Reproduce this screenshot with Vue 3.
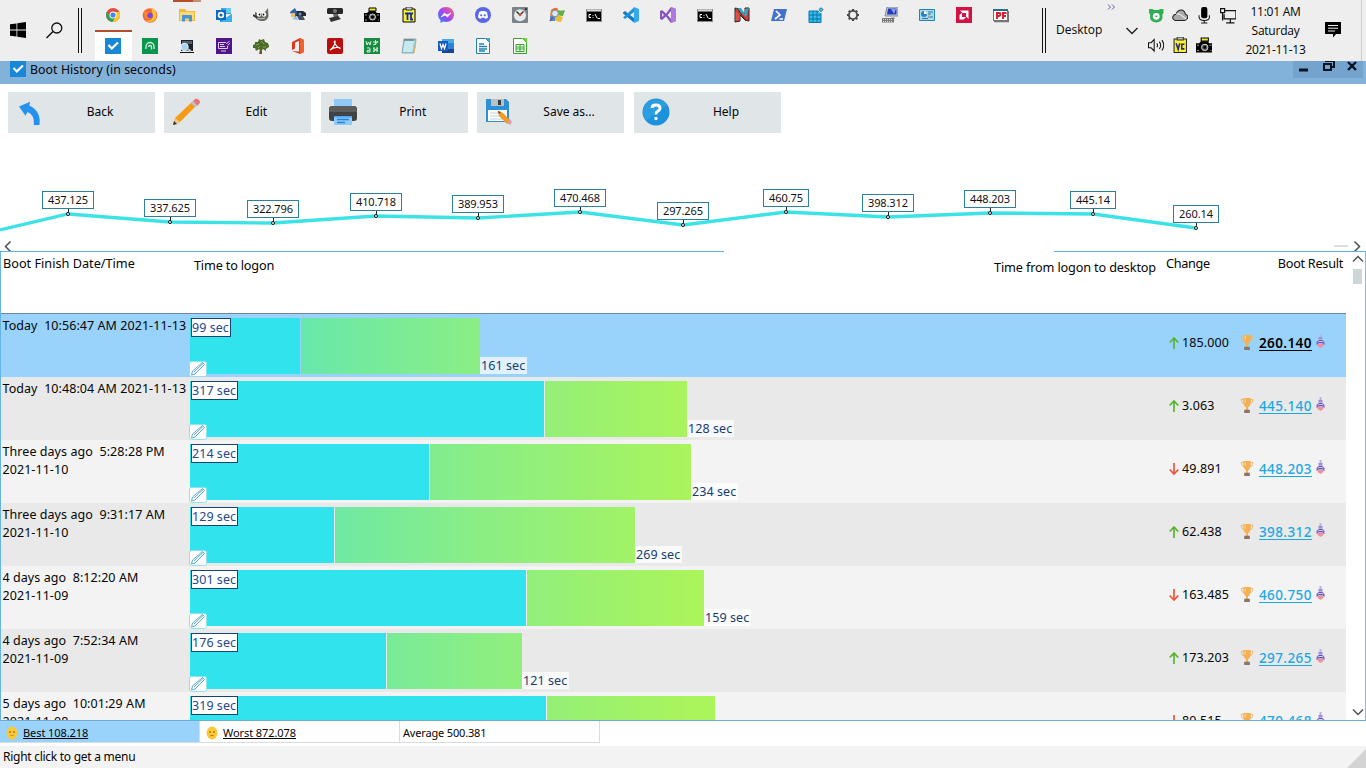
<script setup>
const chrome = '<circle cx="8" cy="8" r="7" fill="#e34b3c"/><path d="M2 4.500A7 7 0 0 0 7.500 15L10.500 9.500 8 8 4.800 9.500Z" fill="#2da653"/><path d="M8 5h6.400A7 7 0 0 1 7.500 15L11 9.500Z" fill="#fbc927"/><circle cx="8" cy="8" r="3.500" fill="#fff"/><circle cx="8" cy="8" r="2.600" fill="#4285f0"/>'
const firefox = '<circle cx="8" cy="8.500" r="7.300" fill="#f8633c"/><path d="M10 1c4 2 6 7 3.500 11C11 15.500 6 16 3 13c4 1.500 8-.500 8-4 0-3-2-4-1-8Z" fill="#fdc42e"/><path d="M2 3l2 2 3-1-1 2 3 1-3 2c1 2 3 2 4 1-1 3-6 3-7 0-.800-2-.500-4-1-7Z" fill="#fb8b2b"/><circle cx="8" cy="8.500" r="2.800" fill="#7c4bd6"/>'
const folder = '<path d="M0 2h6l1.500 2H16v10H0Z" fill="#f3b93f"/><path d="M1 5h14v8H1Z" fill="#fbd977"/><path d="M3 14.500V9q0-1 1-1h8q1 0 1 1v5.500h-3v-3H6v3Z" fill="#4595d8"/>'
const outlook = '<path d="M5 1h10v6H5Z" fill="#35a9e8"/><path d="M10 1h5v5h-5Z" fill="#62ccf7"/><path d="M4 7l6 4 6-4v8H4Z" fill="#1a85d3"/><path d="M4 15l12-8v8Z" fill="#38b2ef"/><rect y="3" width="10" height="10" fill="#0f69bd"/><circle cx="5" cy="8" r="2.400" fill="none" stroke="#fff" stroke-width="1.600"/>'
const gimp = '<path d="M2 5l3 1.500h6L15 1l.500 8c-.500 3-3 5-6 5-4 0-7-2-7.500-5Z" fill="#686760"/><path d="M0 8l5 3" stroke="#333" stroke-width="2"/><circle cx="6" cy="7.500" r="2.200" fill="#fff"/><circle cx="11" cy="7.500" r="2.200" fill="#fff"/><circle cx="6.500" cy="7.500" r=".9"/><circle cx="10.500" cy="7.500" r=".9"/><path d="M4 11q4 2 8 0" stroke="#c7c4bb" fill="none"/>'
const camWizard = '<path d="M5 4h8l3 2v3H5Z" fill="#242b38"/><path d="M7 9h6l2 4H9Z" fill="#475164"/><path d="M0 5l5-4 2 4-1 5H2Z" fill="#2e63ad"/><path d="M1 6h4v4H1Z" fill="#eebb68"/><path d="M2 12l4-3 2 4Z" fill="#8ec0ed"/><circle cx="10" cy="7" r="1.500" fill="#8395b6"/>'
const webcam = '<rect y="1" width="16" height="6" rx="1.500" fill="#272727"/><circle cx="8" cy="4" r="2" fill="#7a7a7a"/><path d="M6 7h5l1 4H7Z" fill="#666"/><path d="M2 11l9-2 3 3-10 3Z" fill="#333"/>'
const camera = '<path d="M0 6h3l2-2h6l2 2h3v9H0Z"/><path d="M5 1h7v3H5Z" fill="#f2ed31" stroke="#000"/><circle cx="8.500" cy="10" r="4" fill="#ccc" stroke="#000"/><circle cx="8.500" cy="10" r="2" stroke="#555"/><path d="M1 8h2M13 8h2M1 13h2M14 13h1" stroke="#999"/>'
const clipPi = '<path d="M2 2h12v13H2Z" fill="#f9f32c" stroke="#000"/><path d="M5 0h6v3H5Z" fill="#ccc" stroke="#333"/><path d="M4 6.500h8M6.500 7v6M10 7v5.500h2" stroke="#152aaf" stroke-width="1.800" fill="none"/>'
const messenger = '<defs><linearGradient id="ms" x1="0" y1="1" x2="1" y2="0"><stop stop-color="#168bff"/><stop offset=".5" stop-color="#a844ef"/><stop offset="1" stop-color="#ff6970"/></linearGradient></defs><path d="M8 0C3 0 0 3.500 0 7.500q0 3.500 2.500 5.500V16L5 14.600q1.500.400 3 .400c5 0 8-3.500 8-7.500S13 0 8 0Z" fill="url(#ms)"/><path d="M3 10l3.500-4 2.500 2 4-2-3.500 4L7 8Z" fill="#fff" stroke="#fff" stroke-width=".7"/>'
const discord = '<circle cx="8" cy="8" r="8" fill="#5966e9"/><path d="M4 5q4-2 8 0l1 5.500q-1.500 1.500-3 1.300l-.500-1h-3l-.500 1q-1.500 0-3-1.300Z" fill="#fff"/><circle cx="6.200" cy="8.300" r="1.100" fill="#5966e9"/><circle cx="9.800" cy="8.300" r="1.100" fill="#5966e9"/>'
const clock = '<rect width="16" height="16" rx="1" fill="#7b8389"/><circle cx="8" cy="8.200" r="6" fill="#e8ebed"/><path d="M4.500 4.500L8 8l3.500-3.500M8 8v1" stroke="#34393d" stroke-width="1.500" fill="none"/><circle cx="8" cy="8" r="1.300" fill="#e34d36"/><circle cx="14" cy="2" r="1" fill="#202427"/>'
const winflag = '<path d="M2 3q5-4 7-1L7 8 1 9Z" fill="#ea6d35"/><path d="M9 3q3 1 7 0l-2 6q-3 0-6-1Z" fill="#68af42"/><path d="M1 9l6 0-1 5-5 0Z" fill="#4a8ee0"/><path d="M7 8l7 2-2 5q-4 0-6-2Z" fill="#e9bd34"/><circle cx="6" cy="6.500" r="3.300" fill="#d7eaf7" stroke="#8291a5"/><path d="M4 10l-3 4" stroke="#666" stroke-width="1.500"/>'
const cmd = '<rect x=".5" y="2.500" width="15" height="12" fill="#000" stroke="#8a8a8a"/><path d="M1 3.500h14" stroke="#ddd" stroke-width="2"/><path d="M5 7.500H3v3h2M7 8v.8M7 10v.8M9 7l2 4M11.500 11.500h2.500" stroke="#fff" fill="none"/>'
const vscode = '<path d="M0 5.500L2 4l9.500 7.500V16L0 6.500Z" fill="#147cc5"/><path d="M11.500 0v4.500L2 12l-2-1.500Z" fill="#1e91d8"/><path d="M11 0l5 2v12l-5 2Z" fill="#34a9ee"/>'
const vstudio = '<path d="M0 4l2-1 4 3.500L11 0l5 2v12l-5 2-5-6.500L2 13l-2-1Z" fill="#8754bd"/><path d="M2 6v4l2-2ZM11 4v8L7.500 8Z" fill="#ededed"/><path d="M11 0l5 2v12l-5 2Z" fill="#ad7be0"/>'
const nred = '<path d="M1 1l5 1 5 5V1l4 0v13l-4-1-5-5v6l-5 1Z" fill="#d83a34" stroke="#282427"/><path d="M2 1h5l4 6V2l4-1-3 9Z" fill="#31a7c7"/><path d="M1.500 14V4l4 4v5Z" fill="#dc5149"/><path d="M3 1l9 13" stroke="#332c32"/>'
const pshell = '<path d="M3 2h13l-3 12H0Z" fill="#4372cd"/><path d="M5 4l4 4-5 4M8.500 12H12" stroke="#fff" stroke-width="1.700" fill="none"/>'
const registry = '<path d="M1 4h12v12H1Z" fill="#35b9ec"/><path d="M1 4h12v11.500H1ZM5 4v12M9 4v12M1 8h12M1 12h12" stroke="#0876a9" fill="none"/><path d="M10 3l2.500-3L16 2.500 13 6Z" fill="#61c4e8" stroke="#ededed"/><path d="M11 2.500L13 .800 15 2.500 13 4.500Z" fill="none" stroke="#197aa4"/>'
const gear = '<circle cx="8" cy="8" r="4.100" fill="none" stroke="#4d4d4d" stroke-width="1.900"/><path d="M8 2v2M8 12v2M2 8h2M12 8h2M3.700 3.700l1.300 1.300M11 11l1.300 1.300M12.300 3.700l-1.300 1.300M5 11l-1.300 1.300" stroke="#4d4d4d" stroke-width="2.200"/>'
const remote = '<path d="M5 0h11v9H3Z" fill="#c8cedb" stroke="#7e8796"/><path d="M6 1.500h8.500v6H5Z" fill="#2438bb"/><path d="M9 2l5 0-2 5Z" fill="#829eea"/><path d="M9 9h4v3H9Z" fill="#bbb"/><path d="M0 11h12v4.500H0Z" fill="#777"/><path d="M1 12.500h10M1 14.500h10" stroke="#ddd" stroke-dasharray="1"/>'
const panel = '<path d="M.5 2.500h15v11H.5Z" fill="#a8dbf1" stroke="#2781a8"/><circle cx="5" cy="7" r="3" fill="#2781c3"/><path d="M5 4a3 3 0 0 1 3 3H5Z" fill="#fff"/><path d="M9 5h5M9 7h3M9 10h5M3 11.500h6" stroke="#247aa5"/><circle cx="10" cy="9" r="1" fill="#e8a63b"/>'
const amd = '<rect width="16" height="16" fill="#d21243"/><path d="M4 3.500h8.500V12L10 9.500V6H6.500ZM3.500 8L6 5.800V10h4l-2.300 2.500H3.500Z" fill="#fff"/>'
const pf = '<rect x=".5" y="2.500" width="14" height="11" fill="#fff" stroke="#6d777e"/><path d="M0 3h15" stroke="#266d8f" stroke-width="2"/><path d="M1 14.500h14.500V4" stroke="#777" stroke-width="1.500" fill="none"/><path d="M4 12V6h2q1.500 0 1.500 1.500T6 9H4M10 12V6h3.500M10 9h3" stroke="#da1e2a" stroke-width="1.900" fill="none"/>'
const check = '<rect width="16" height="16" fill="#1887d5"/><path d="M3.500 7l3.300 3.500L13 4.500" stroke="#fff" stroke-width="2.200" fill="none"/>'
const spiral = '<rect width="16" height="16" fill="#07964b"/><path d="M4 11V8.500a4 4 0 0 1 8 0V11M6.500 9q0-1.500 1.500-1.500t1.500 1.500v2.500" stroke="#d6f3df" stroke-width="1.300" fill="none"/>'
const monitor = '<path d="M2 2h12v11H2Z" fill="#1c2229"/><path d="M3 3h10v3H3Z" fill="#54616c"/><path d="M1 14h14v1H1Z" fill="#111"/><circle cx="5.500" cy="9" r="3.700" fill="#a6d6ee" stroke="#eef"/><path d="M8 11l4 2" stroke="#b7c5ce" stroke-width="2"/>'
const screen = '<rect width="16" height="16" fill="#51158a"/><path d="M10 4.500H2.500v6h9V8M5 13h5M4 6.500h4M4 8.500h5M10.500 6q.500-2 3-2.500M12 7.500q0-1.500 2-2" stroke="#dfc9f5" fill="none"/>'
const tree = '<path d="M8 7L6 16h3L9 7Z" fill="#77532e"/><path d="M0 10l0-3 2-1L2 4l3 0 1-3 2 1 3-1 1 3 3 1 1 3 0 1-3 2 0 2-3-2-2 2-2-2-3 2-1-3Z" fill="#4d6c2c"/><path d="M3 7l3-1M8 3l3 3M5 10l2-2M10 9l3 0" stroke="#88a154"/>'
const office = '<path d="M2 4l8-4 4 2v12l-4 2-8-3 7 .500V3L5 4.500v6L2 12Z" fill="#da3b1d"/><path d="M10 0l4 2v12l-4 2Z" fill="#f0632f"/>'
const acrobat = '<rect width="16" height="16" rx="2" fill="#b90e0b"/><path d="M3 12c3-2 6-7 5-9-2 0 0 5 5 7.500 1-1.500-6-2-10 1.500Z" stroke="#fff" stroke-width="1.200" fill="none"/>'
const translate = '<rect width="16" height="16" fill="#178b3f"/><path d="M2 3l1 4 1.500-3L6 7l1-4M9 4h5M11.500 2v5M9 7q4-1 5-4M3 10q3-1 3 1v3H3q-1-2 3-2M10 9v5M13 9v5M9 10l5 3M9 14l5-4" stroke="#d8f4df" fill="none"/>'
const notepad = '<path d="M3 1h12l-2 14H1Z" fill="#9bd3df" stroke="#809da0" stroke-width=".8"/><path d="M4 3h9l-2 11H2Z" fill="#c6eaf0"/><path d="M4 1v2M6 1v2M8 1v2M10 1v2M12 1v2" stroke="#546267"/><path d="M13 15l2-12" stroke="#e4b362"/>'
const word = '<path d="M4 1h12v14H4Z" fill="#2e83d5"/><path d="M4 1h12v4H4Z" fill="#48a9ee"/><path d="M4 11h12v4H4Z" fill="#174696"/><path d="M0 3h10v10H0Z" fill="#185abd"/><path d="M2 5.500l1.500 5 1.500-4 1.500 4 1.500-5" stroke="#fff" stroke-width="1.200" fill="none"/>'
const writer = '<path d="M1.500.5h9l4 4v11h-13Z" fill="#fff" stroke="#2383af"/><path d="M10 0h5v5Z" fill="#44a4cd"/><path d="M4 6h5M4 8.500h8M4 11h8M4 13h6" stroke="#2383af" stroke-width="1.300"/>'
const calc = '<path d="M1.500.5h9l4 4v11h-13Z" fill="#fff" stroke="#37a42c"/><path d="M10 0h5v5Z" fill="#70cf45"/><path d="M4 6.500h8v7H4ZM4 9h8M4 11h8M8 6.500v7" stroke="#37a42c" fill="none"/>'
const topIcons = [chrome, firefox, folder, outlook, gimp, camWizard, webcam, camera, clipPi, messenger, discord, clock, winflag, cmd, vscode, vstudio, cmd, nred, pshell, registry, gear, remote, panel, amd, pf]
const lowIcons = [check, spiral, monitor, screen, tree, office, acrobat, translate, notepad, word, writer, calc]

const bear = '<path d="M1 2h3l2 1h4l2-1h3v4l-1 1v4q-1 4-6 4T2 11V7L1 6Z" fill="#2fae54"/><circle cx="8" cy="9" r="3.300" fill="#fff"/><path d="M6.500 8.500h3L8 10Z" fill="#1b8040"/>'
const cloud = '<path d="M3 13q-3-1-2-4 1-2 3-2 1-4 5-4 3 0 4 4 3 1 2 4-1 2-3 2Z" fill="#aaa" stroke="#222"/><path d="M4 7q3-1 5 1l5 4" stroke="#eee" fill="none"/>'
const mic = '<rect x="5" y="0" width="6" height="11" rx="2"/><path d="M3 8v2q0 3 5 3t5-3V8M8 13v3M5 15.500h6" stroke="#111" fill="none"/>'
const net = '<path d="M5 3.500h10.500v8H4V7M10 12v3M6 15.500h8M.500 1.500h4v4h-4ZM2.500 6v7" fill="none" stroke="#111" stroke-width="1.200"/>'
const speaker = '<path d="M.5 5.500H3L6 2.500v11L3 10.500H.500ZM8.500 6q1.500 2 0 4M11 4.500q2.500 3.500 0 7M13.500 3q3.500 5 0 10" fill="none" stroke="#111"/>'
const clipVc = '<path d="M2 2h12v13H2Z" fill="#f9f32c" stroke="#222"/><path d="M5 0h6v3H5Z" fill="#bbb" stroke="#333"/><path d="M4 6l2 6 1.500-6M12 7H9.500v4.500H12" stroke="#28238b" stroke-width="1.500" fill="none"/>'
const tray = [bear, cloud, mic, net, speaker, clipVc, camera]

const undo = '<path d="M0 7L12 2l-1 4q13 6 11 21l-6 0q1-11-7-14l-2 4Z" fill="#2492ed"/>'
const pencil = '<path d="M1 27l2-7L21 3l4 4L8 24Z" fill="#f79b17"/><path d="M21 3l2-2q2-1 4 1t0 4l-2 2Z" fill="#e77478"/><path d="M19 5l2-2 4 4-2 2Z" fill="#b7c4cc"/><path d="M3 20l5 4-7 3Z" fill="#f2c48b"/><path d="M1 27l1-4 3 3Z" fill="#333"/>'
const printer = '<path d="M5 1h18v8H5Z" fill="#90caf9"/><rect y="8" width="28" height="15" rx="3" fill="#424242"/><path d="M2 8h24l2 4v2H0v-2Z" fill="#5d5d5d"/><path d="M5 18h18v9H5Z" fill="#90caf9"/><path d="M5 18h18v1.500H5Z" fill="#42a5f5"/><path d="M8 21.500h12M8 24.500h8" stroke="#2485d9" stroke-width="1.300"/>'
const save = '<path d="M1 1h20l3 3v20H1Z" fill="#2f8fd3"/><path d="M6 1h13v7H6Z" fill="#b9c1c5"/><path d="M13 2h3v5h-3Z" fill="#343f45"/><path d="M3 12h19v11H3Z" fill="#fff"/><path d="M5 15h13M5 18h10M5 21h13" stroke="#c3d1d9"/><path d="M13 13l5 2 7 7-3 4-8-8Z" fill="#f59a20"/><path d="M22 25l3-4 2 3-2 3Z" fill="#dd99b4"/><path d="M13 13l3 1-2 2Z" fill="#54473a"/>'
const help = '<circle cx="14" cy="14" r="13.500" fill="#1d92dc"/><path d="M3 7A13.500 13.500 0 0 1 25 7L4 23A13.500 13.500 0 0 1 3 7Z" fill="#35a6e5" opacity=".6"/><path d="M10 10q0-3 4-3t4 3.200q0 2-2.500 3.200Q14 14 14 16.500" fill="none" stroke="#fff" stroke-width="2.800"/><circle cx="14" cy="20.500" r="1.700" fill="#fff"/>'
const tools = [
  { label: 'Back', icon: undo, cls: 'small' }, { label: 'Edit', icon: pencil }, { label: 'Print', icon: printer },
  { label: 'Save as...', icon: save }, { label: 'Help', icon: help, cls: 'wide' }
]

const points = [
  [68, 214, '437.125'], [170, 222, '337.625'], [273, 223, '322.796'], [376, 216, '410.718'], [478, 218, '389.953'], [580, 212, '470.468'],
  [683, 225, '297.265'], [786, 212, '460.75'], [888, 217, '398.312'], [990, 213, '448.203'], [1093, 214, '445.14'], [1196, 228, '260.14']
].map(([x, y, v]) => ({ x, y: y - 133, v, w: v.length > 6 ? 51 : 45 }))
const line = '0,97 ' + points.map(p => p.x + ',' + p.y).join(' ')

const rows = [
  { d: 'Today\u00a0 10:56:47 AM 2021-11-13', a: 99, aw: 110, b: 161, bw: 179, up: true, c: '185.000', r: '260.140' },
  { d: 'Today\u00a0 10:48:04 AM 2021-11-13', a: 317, aw: 354, b: 128, bw: 142, up: true, c: '3.063', r: '445.140' },
  { d: 'Three days ago\u00a0 5:28:28 PM', e: '2021-11-10', a: 214, aw: 239, b: 234, bw: 261, up: false, c: '49.891', r: '448.203' },
  { d: 'Three days ago\u00a0 9:31:17 AM', e: '2021-11-10', a: 129, aw: 144, b: 269, bw: 300, up: true, c: '62.438', r: '398.312' },
  { d: '4 days ago\u00a0 8:12:20 AM', e: '2021-11-09', a: 301, aw: 336, b: 159, bw: 177, up: false, c: '163.485', r: '460.750' },
  { d: '4 days ago\u00a0 7:52:34 AM', e: '2021-11-09', a: 176, aw: 196, b: 121, bw: 135, up: true, c: '173.203', r: '297.265' },
  { d: '5 days ago\u00a0 10:01:29 AM', e: '2021-11-08', a: 319, aw: 356, bw: 168, up: false, c: '80.515', r: '470.468' }
]
</script>

<template>
  <div class="desktop">
    <header class="taskbar">
      <svg class="start" viewBox="0 0 16 16"><path d="M0 2.300L6.500 1.400v6.200H0ZM7.300 1.300L16 0v7.600H7.300ZM0 8.400h6.500v6.200L0 13.700ZM7.300 8.400H16V16l-8.700-1.300Z" /></svg>
      <svg class="search" viewBox="0 0 17 17"><circle cx="10.800" cy="6" r="5" fill="none" stroke="#111" stroke-width="1.300" /><path d="M7 9.500L.500 16" stroke="#111" stroke-width="1.500" /></svg>
      <i class="grip"></i>
      <div class="apps">
        <div class="strip top"><span v-for="(g, i) in topIcons" :key="i" :class="{ open: i === 2 }"><svg viewBox="0 0 16 16" v-html="g"></svg></span></div>
        <div class="strip low"><span v-for="(g, i) in lowIcons" :key="i" :class="{ active: i === 0 }"><svg viewBox="0 0 16 16" v-html="g"></svg></span></div>
      </div>
      <i class="grip second"></i>
      <span class="desk">Desktop</span>
      <svg class="more" viewBox="0 0 9 6"><path d="M1 .500L3.500 3 1 5.500M5 .500L7.500 3 5 5.500" fill="none" stroke="#5c5f9c" /></svg>
      <svg class="chev" viewBox="0 0 12 8"><path d="M.500 1L6 6.500 11.500 1" fill="none" stroke="#222" stroke-width="1.400" /></svg>
      <div class="tray"><svg v-for="(g, i) in tray" :key="i" viewBox="0 0 16 16" v-html="g"></svg></div>
      <div class="clock"><span>11:01 AM</span><span>Saturday</span><span>2021-11-13</span></div>
      <svg class="note" viewBox="0 0 16 16"><path d="M0 0h16v12h-5l-3 3.500V12H0Z" /><path d="M3 3.500h10M3 6.200h10M3 9h7" stroke="#eee" /></svg>
      <i class="peek"></i>
    </header>

    <div class="titlebar">
      <svg class="ticon" viewBox="0 0 16 16" v-html="check"></svg>
      <span class="ttext">Boot History (in seconds)</span>
      <svg class="wincontrols" viewBox="0 0 70 17"><rect width="70" height="17" fill="#74a3cd" /><path d="M6 9h9" stroke="#06121f" stroke-width="3" /><path d="M33 1v-1h8v6h-3" fill="none" stroke="#06121f" stroke-width="2" /><path d="M31 3h7v6h-7Z" fill="none" stroke="#06121f" stroke-width="2" /><path d="M55 1l8 8M63 1l-8 8" stroke="#06121f" stroke-width="2.400" /></svg>
    </div>

    <nav class="toolbar">
      <button v-for="t in tools" :key="t.label" :class="t.cls"><svg viewBox="0 0 28 28" v-html="t.icon"></svg><span>{{ t.label }}</span></button>
    </nav>

    <svg class="chart" width="1366" height="119" viewBox="0 0 1366 119">
      <polyline :points="line" fill="none" stroke="#3be2e6" stroke-width="3.300" />
      <g v-for="p in points" :key="p.x">
        <path :d="`M${p.x + .5} ${p.y - 5}v4`" stroke="#222" />
        <circle :cx="p.x" :cy="p.y" r="1.500" fill="#fff" stroke="#111" />
        <rect :x="p.x - Math.floor(p.w / 2) - .5" :y="p.y - 22.500" :width="p.w" height="17" fill="#fff" stroke="#2d7f9e" />
        <text :x="p.x" :y="p.y - 10" text-anchor="middle" :textLength="p.w - 11">{{ p.v }}</text>
      </g>
      <path d="M10.500 108.500L5.500 113.500l5 5" class="arrow" /><path d="M1354.500 108.500l5 5-5 5" class="arrow" />
      <path d="M1334 113h14" stroke="#ccd3d8" stroke-width="1.500" /><path d="M0 118.500h724M1054 118.500h312" stroke="#59b5dc" />
    </svg>

    <main class="table">
      <div class="body">
        <div class="thead"><span>Boot Finish Date/Time</span><span class="logon">Time to logon</span><span class="desktoptime">Time from logon to desktop</span><span class="hchange">Change</span><span class="hresult">Boot Result</span></div>
        <div v-for="(r, i) in rows" :key="i" class="row" :class="{ selected: i === 0 }">
          <div class="date"><div>{{ r.d }}</div><div v-if="r.e">{{ r.e }}</div></div>
          <div class="bars">
            <div class="seg one" :style="{ width: r.aw + 'px' }"></div>
            <div class="seg two" :style="{ width: r.bw + 'px', backgroundPositionX: -(r.aw + 1) + 'px' }"></div>
            <span v-if="r.b" class="after">{{ r.b }} sec</span>
            <span class="before">{{ r.a }} sec</span>
            <svg class="editbox" viewBox="0 0 18 16"><rect x=".5" y=".5" width="17" height="15" rx="2" fill="#fff" stroke="#8fe3ee" /><path d="M2.500 14l1-4L13.500 1.500l2 2-9.500 9.500ZM5 11l9-8.500" fill="none" stroke="#4aa0cc" stroke-width=".9" /></svg>
          </div>
          <div class="change">
            <svg viewBox="0 0 10 12"><path v-if="r.up" d="M5 12V1.500M.700 5.500L5 1l4.300 4.500" fill="none" stroke="#57b52d" stroke-width="1.700" /><path v-else d="M5 0v10.500M.700 6.500L5 11l4.300-4.500" fill="none" stroke="#ef5436" stroke-width="1.700" /></svg>
            <span>{{ r.c }}</span>
          </div>
          <div class="result">
            <svg class="cup" viewBox="0 0 14 16"><path d="M3 0h8v5q-1 4-3 5v3H6v-3Q4 9 3 5Z" fill="#f4b052" /><path d="M3 1.500H.700Q1 6 4 6.500M11 1.500h2.300Q13 6 10 6.500" fill="none" stroke="#edb66c" /><path d="M5 1v4" stroke="#ffdca1" /><path d="M4 12.500h6V16H4Z" fill="#8b7565" /></svg>
            <span>{{ r.r }}</span>
            <svg class="rocket" viewBox="0 0 9 14"><path d="M3.500 0h2v3h-2Z" fill="#b9b3dc" /><path d="M2.500 3h4v7h-4Z" fill="#d9d6f2" /><path d="M2.500 4h4M2.500 6.300h4M2.500 8.600h4" stroke="#5f4bb5" stroke-width="1.200" /><path d="M2.500 6L.500 8v3l2-1ZM6.500 6l2 2v3l-2-1Z" fill="#7d68c6" /><path d="M2 10h5l.500 2-3 2-3-2Z" fill="#f4909a" /></svg>
          </div>
        </div>
      </div>
      <aside class="scroll">
        <svg viewBox="0 0 12 8"><path d="M1 6.500L6 1.500l5 5" class="arrow" /></svg><i></i><svg class="down" viewBox="0 0 12 8"><path d="M1 1.500l5 5 5-5" class="arrow" /></svg>
      </aside>
    </main>

    <footer>
      <div class="stats">
        <div class="best"><svg viewBox="0 0 12 14"><ellipse cx="6" cy="7" rx="5.500" ry="6.500" fill="#fbc937" /><circle cx="4" cy="6" r=".8" fill="#6b4c20" /><circle cx="8" cy="6" r=".8" fill="#6b4c20" /><path d="M4 9q2 1.300 4 0" fill="none" stroke="#d0902b" /></svg><u>Best 108.218</u></div>
        <div><svg viewBox="0 0 12 14"><ellipse cx="6" cy="7" rx="5.500" ry="6.500" fill="#fbc937" /><circle cx="4" cy="6" r=".8" fill="#6b4c20" /><circle cx="8" cy="6" r=".8" fill="#6b4c20" /><path d="M4 10q2-1.500 4 0" fill="none" stroke="#c07b26" /></svg><u>Worst 872.078</u></div>
        <div class="avg">Average 500.381</div>
      </div>
      <div class="status">Right click to get a menu<svg viewBox="0 0 19 19"><path d="M19 0v19H0Z" fill="#d4d4d4" /></svg></div>
    </footer>
  </div>
</template>

<style>
body { margin: 0; overflow: hidden; }
</style>

<style scoped>
.desktop { width: 1366px; height: 768px; overflow: hidden; background: #fff; color: #050505; font: 13px/18px "Noto Sans", sans-serif; display: flex; flex-direction: column; }
svg { display: block; flex: none; }
span, u { white-space: nowrap; }
.taskbar { height: 61px; flex: none; background: #eee; display: flex; position: relative; font: 12px/19px "Open Sans", sans-serif; }
.start { width: 16px; height: 16px; margin: 22px 0 0 10px; }
.search { width: 17px; height: 17px; margin: 22px 0 0 20px; }
.grip { flex: none; box-sizing: border-box; width: 4px; height: 45px; margin: 8px 0 0 15px; border: solid #111; border-width: 0 1px; }
.apps { width: 925px; margin-left: 12.500px; flex: none; display: flex; flex-direction: column; }
.strip { display: flex; height: 31px; }
.strip span { width: 37px; display: flex; justify-content: center; align-items: center; box-sizing: border-box; flex: none; }
.strip svg { width: 16px; height: 16px; }
.top { height: 30px; }
.low { height: 31px; }
.strip .active { background: #fff; border-top: 2px solid #b14f2a; padding-bottom: 2px; }
.strip .open { position: relative; }
.strip .open::before { content: ""; position: absolute; top: 0; left: 4px; width: 28px; height: 2px; background: linear-gradient(90deg, #b14f2a 20px, #c88d74 20px); }
.second { margin-left: 22.500px; }
.desk { margin: 20px 0 0 10px; width: 70px; }
.more { width: 9px; height: 6px; position: absolute; left: 1107px; top: 4px; }
.chev { width: 12px; height: 8px; margin-top: 27px; }
.tray { margin: 7px 0 0 9.500px; width: 96px; display: grid; grid-template-columns: repeat(4, 24px); grid-auto-rows: 30px; flex: none; }
.tray svg { width: 16.500px; height: 16.500px; }
.clock { width: 76px; margin: 2px 0 0 -6px; display: flex; flex-direction: column; align-items: center; letter-spacing: -.25px; }
.note { width: 16px; height: 16px; margin: 22px 0 0 11px; }
.peek { width: 1px; background: #ccc; position: absolute; right: 4px; top: 0; height: 61px; }
.titlebar { height: 23px; flex: none; background: #82b1da; display: flex; align-items: flex-start; overflow: hidden; }
.ticon { width: 16px; height: 16px; margin-left: 10px; }
.ttext { margin: 0 0 0 4px; font: 12.300px/18px "Noto Sans", sans-serif; letter-spacing: .08px; flex: 1; }
.wincontrols { width: 70px; height: 17px; margin-right: 3px; }
.toolbar { height: 49px; flex: none; box-sizing: border-box; padding: 8px 0 0 8px; display: flex; gap: 9.350px; }
button { width: 147px; height: 41px; border: 0; padding: 0 0 0 7px; background: #e0e5e8; display: flex; align-items: center; font: 12px/18px "Noto Sans", sans-serif; color: #050505; flex: none; }
button.wide { margin-left: .600px; }
button svg { width: 28px; height: 28px; margin: -1px 0 0 1px; }
button.small svg { width: 26px; height: 26px; margin: 0 0 0 4px; }
button.small span { margin-left: -1px; }
button span { flex: 1; text-align: center; padding: 0 0 2px 1px; }
.chart { height: 119px; }
.chart text { font: 11px "Noto Sans", sans-serif; fill: #111; }
.arrow { fill: none; stroke: #4d5255; stroke-width: 1.500; }
.table { height: 468px; flex: none; display: flex; border-left: 1px solid #66b4e3; border-right: 1px solid #77c1e5; border-bottom: 1px solid #6cabd2; width: 1364px; overflow: hidden; }
.body { width: 1345px; }
.thead { border-bottom: 1px solid #708898; display: grid; grid-template-columns: 191px 600px 372px 72px 1fr; padding: 2px 3px 0 2px; box-sizing: border-box; height: 62px; font-size: 12.700px; }
.logon { padding-top: 2px; letter-spacing: -.18px; }
.desktoptime { padding: 4px 10px 0 0; text-align: right; letter-spacing: -.15px; }
.hchange { letter-spacing: -.3px; }
.hresult { text-align: right; letter-spacing: -.28px; }
.row { height: 63px; display: grid; grid-template-columns: 189px 977px 72.500px 1fr; background: #f3f3f3; overflow: hidden; }
.row:nth-child(odd) { background: #e9e9e9; }
.row.selected { background: #99d3fb; }
.date { padding: 3px 0 0 1.500px; font-size: 12.500px; letter-spacing: .06px; white-space: nowrap; }
.bars { position: relative; display: flex; padding-top: 4px; height: 56px; }
.seg { height: 56px; flex: none; }
.one { background: #31e3ec; }
.two { margin-left: 1px; background: linear-gradient(90deg, #48e4cd 0, #68e8ac 110px, #8aee84 290px, #aaf45c 500px) 0 0 / 530px 56px no-repeat; }
.after { align-self: flex-end; padding: 0 2px 0 1px; height: 17px; line-height: 18px; background: rgba(255,255,255,.7); color: #153d70; font-size: 12.500px; letter-spacing: .08px; }
.before { position: absolute; left: 1px; top: 3.500px; height: 17px; line-height: 18px; padding: 0 1px 0 0; border: 1px solid #174471; background: #fff; color: #24478d; font-size: 12.500px; letter-spacing: .04px; }
.editbox { position: absolute; width: 18px; height: 16px; left: -1px; top: 47px; }
.change { display: flex; padding: 20px 0 0 2px; font-size: 12.500px; gap: 3px; letter-spacing: .12px; }
.change svg { width: 10px; height: 12px; margin-top: 3px; }
.result { display: flex; padding-top: 20px; font-size: 13.500px; }
.result span { border-bottom: 1px solid #1ba8e4; height: 16px; line-height: 18px; color: #1ba8e4; margin: 0 4px 0 5.500px; width: 53px; font-weight: 500; letter-spacing: .4px; }
.selected .result span { color: #000; border-color: #000; font-weight: 600; }
.cup { width: 14px; height: 15px; margin-top: 1px; }
.rocket { width: 9px; height: 14px; }
.scroll { width: 19px; display: flex; flex-direction: column; align-items: center; padding: 3px 0 4px 4px; box-sizing: border-box; }
.scroll svg { width: 12px; height: 8px; }
.scroll i { width: 9px; height: 15px; margin-top: 6px; background: #cfd6da; }
.scroll .down { margin-top: auto; }
footer { height: 47px; flex: none; display: flex; flex-direction: column; }
.stats { height: 22px; display: flex; font: 11px/22px "Noto Sans", sans-serif; }
.stats > div { width: 200px; box-sizing: border-box; display: flex; align-items: center; border: solid #d8dde1; border-width: 0 1px 1px 0; padding: 2px 0 0 6px; }
.stats .best { background: #99d3fb; }
.stats svg { width: 12px; height: 14px; margin-right: 5px; }
.stats u { text-underline-offset: 1px; letter-spacing: -.08px; }
.stats .avg { padding-left: 3px; letter-spacing: -.17px; }
.status { margin-top: 3px; flex: 1; background: #f3f3f3; display: flex; justify-content: space-between; align-items: center; padding-left: 3px; font-size: 12px; letter-spacing: -.27px; }
.status svg { width: 19px; height: 19px; align-self: flex-end; }
</style>
